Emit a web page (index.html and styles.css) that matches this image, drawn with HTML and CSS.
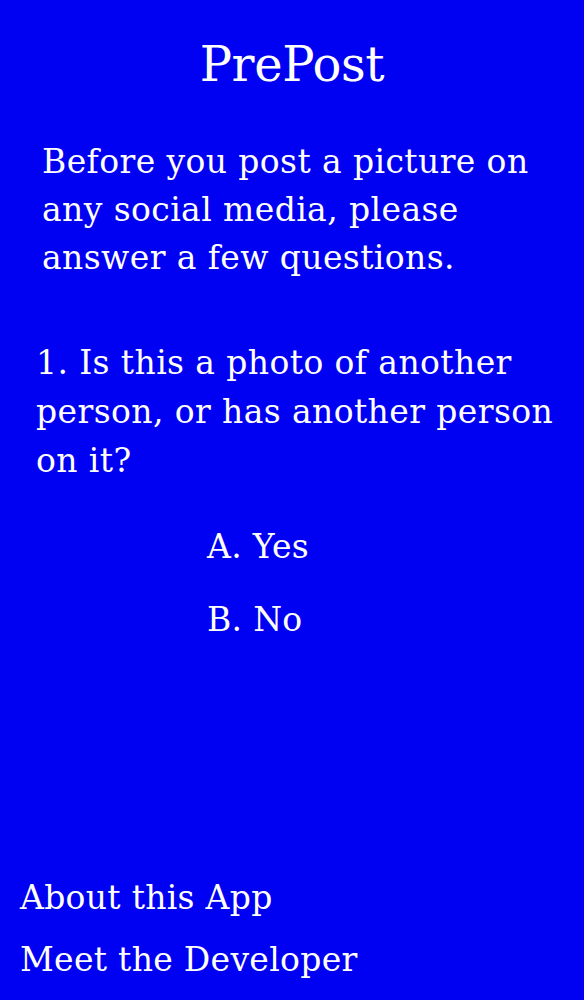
FILE: index.html
```html
<!DOCTYPE html>
<html>

<head>
  <title>PrePost</title>
  <link rel="stylesheet" href="styles.css">
</head>

<body>
  <div class="screen">
    <div class="title">PrePost</div>
    <p class="intro">Before you post a picture on any social media, please answer a few questions.</p>
    <p class="question">1. Is this a photo of another person, or has another person on it?</p>
    <div class="answers">
      <a class="answer" href="#">A. Yes</a>
      <a class="answer" href="#">B. No</a>
    </div>
    <div class="links">
      <a class="link" href="#">About this App</a>
      <a class="link" href="#">Meet the Developer</a>
    </div>
  </div>
</body>

</html>
```

FILE: styles.css
```css
body {
  font-family: "DejaVu Serif", serif;
  background-color: #0000f2;
  color: #fff;
  margin: 0;
  padding: 0;
}

.screen {
  height: 1000px;
  box-sizing: border-box;
  display: flex;
  flex-direction: column;
  padding: 34px 0 15px 0;
}

.title {
  font-size: 48px;
  text-align: center;
  line-height: 60px;
  letter-spacing: -0.3px;
}

.intro {
  font-size: 33px;
  letter-spacing: 0.4px;
  line-height: 48px;
  margin: 44px 30px 0 42px;
}

.question {
  font-size: 33px;
  letter-spacing: 0.4px;
  line-height: 49px;
  margin: 56px 10px 0 36px;
}

.answers {
  display: flex;
  flex-direction: column;
  gap: 23px;
  padding-left: 207px;
  margin-top: 37px;
}

.answer,
.link {
  color: #fff;
  text-decoration: none;
  font-size: 33px;
  letter-spacing: 0.3px;
  line-height: 50px;
}

.links {
  margin-top: auto;
  display: flex;
  flex-direction: column;
  gap: 12px;
  padding-left: 20px;
}
```
